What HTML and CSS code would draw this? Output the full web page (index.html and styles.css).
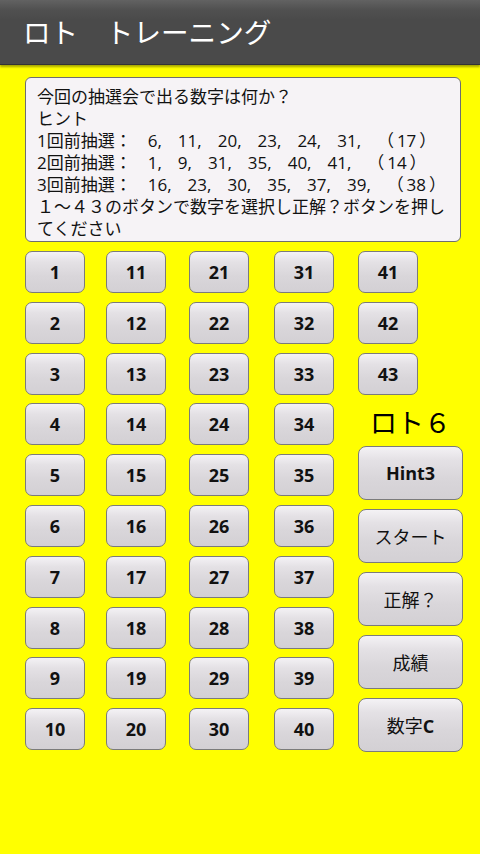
FILE: index.html
```html
<!DOCTYPE html>
<html lang="ja">
<head>
<meta charset="utf-8">
<title>ロト　トレーニング</title>
<link rel="stylesheet" href="styles.css">
</head>
<body>
<header class="titlebar"><span class="title">ロト　トレーニング</span></header>
<main class="content">
  <div class="info">
    <div>今回の抽選会で出る数字は何か？</div>
    <div>ヒント</div>
    <div class="draw">1回前抽選：<span class="gap"></span>6,<span class="gap"></span>11,<span class="gap"></span>20,<span class="gap"></span>23,<span class="gap"></span>24,<span class="gap"></span>31,<span class="gap"></span>（&#8201;17&#8201;）</div>
    <div class="draw">2回前抽選：<span class="gap"></span>1,<span class="gap"></span>9,<span class="gap"></span>31,<span class="gap"></span>35,<span class="gap"></span>40,<span class="gap"></span>41,<span class="gap"></span>（&#8201;14&#8201;）</div>
    <div class="draw">3回前抽選：<span class="gap"></span>16,<span class="gap"></span>23,<span class="gap"></span>30,<span class="gap"></span>35,<span class="gap"></span>37,<span class="gap"></span>39,<span class="gap"></span>（&#8201;38&#8201;）</div>
    <div>１～４３のボタンで数字を選択し正解？ボタンを押してください</div>
  </div>
  <div class="board">
    <div class="col">
      <button class="num">1</button><button class="num">2</button><button class="num">3</button><button class="num">4</button><button class="num">5</button><button class="num">6</button><button class="num">7</button><button class="num">8</button><button class="num">9</button><button class="num">10</button>
    </div>
    <div class="col">
      <button class="num">11</button><button class="num">12</button><button class="num">13</button><button class="num">14</button><button class="num">15</button><button class="num">16</button><button class="num">17</button><button class="num">18</button><button class="num">19</button><button class="num">20</button>
    </div>
    <div class="col">
      <button class="num">21</button><button class="num">22</button><button class="num">23</button><button class="num">24</button><button class="num">25</button><button class="num">26</button><button class="num">27</button><button class="num">28</button><button class="num">29</button><button class="num">30</button>
    </div>
    <div class="col">
      <button class="num">31</button><button class="num">32</button><button class="num">33</button><button class="num">34</button><button class="num">35</button><button class="num">36</button><button class="num">37</button><button class="num">38</button><button class="num">39</button><button class="num">40</button>
    </div>
    <div class="col col-right">
      <button class="num">41</button><button class="num">42</button><button class="num">43</button>
      <div class="game">ロト６</div>
      <div class="actions">
        <button class="act act-bold">Hint3</button>
        <button class="act">スタート</button>
        <button class="act">正解？</button>
        <button class="act">成績</button>
        <button class="act">数字<b class="latin">C</b></button>
      </div>
    </div>
  </div>
</main>
</body>
</html>
```
FILE: styles.css
```css
html, body {
  margin: 0;
  padding: 0;
}
body {
  width: 480px;
  height: 854px;
  background: #ffff00;
  overflow: hidden;
  font-family: "Open Sans", "Noto Sans CJK JP", sans-serif;
  color: #111;
}
.titlebar {
  height: 65px;
  box-sizing: border-box;
  background: linear-gradient(to bottom, #626262 0px, #505050 10px, #4a4a4a 20px, #4a4a4a 100%);
  border-bottom: 1px solid #333;
  box-shadow: 0 2px 2px rgba(60, 60, 0, 0.45);
  display: flex;
  align-items: center;
  padding-left: 23px;
}
.title {
  font-family: "Noto Sans CJK JP", sans-serif;
  font-size: 27.6px;
  color: #ffffff;
  line-height: 1;
}
.content {
  padding: 12px 0 0 25px;
}
.info {
  width: 436px;
  height: 165px;
  box-sizing: border-box;
  background: #f6f3f6;
  border: 1px solid #6e6e6e;
  border-radius: 6px;
  padding: 8px 11px 0 11px;
  font-family: "Open Sans", "Noto Sans CJK JP", sans-serif;
  font-size: 17px;
  line-height: 22px;
  color: #111;
}
.draw {
  white-space: nowrap;
}
.gap {
  display: inline-block;
  width: 16px;
}
.board {
  margin-top: 9px;
  display: grid;
  grid-template-columns: 81px 83px 85px 84px 105px;
  align-items: start;
}
.col {
  display: flex;
  flex-direction: column;
  gap: 8.8px;
}
.num, .act {
  margin: 0;
  padding: 0;
  box-sizing: border-box;
  border: 1px solid #7b7b7b;
  border-radius: 7px;
  background: linear-gradient(to bottom, #f4f2f5 0%, #e4e1e5 25%, #d9d6da 60%, #d3d0d4 100%);
  color: #111;
  cursor: pointer;
}
.num {
  width: 60px;
  height: 42px;
  font-family: "Open Sans", "Noto Sans CJK JP", sans-serif;
  font-weight: 700;
  font-size: 18px;
}
.game {
  height: 51px;
  margin-top: -8.8px;
  margin-bottom: -8.8px;
  display: flex;
  align-items: center;
  justify-content: center;
  font-family: "Noto Sans CJK JP", sans-serif;
  font-size: 27px;
  color: #000;
  padding-top: 2px;
  box-sizing: border-box;
}
.actions {
  display: flex;
  flex-direction: column;
  gap: 9px;
}
.act {
  width: 105px;
  height: 54px;
  font-family: "Noto Sans CJK JP", sans-serif;
  font-weight: 400;
  font-size: 18px;
  border-radius: 8px;
}
.act-bold {
  font-family: "Open Sans", sans-serif;
  font-weight: 700;
  font-size: 18px;
}
.latin {
  font-family: "Open Sans", sans-serif;
  font-weight: 700;
}
```
